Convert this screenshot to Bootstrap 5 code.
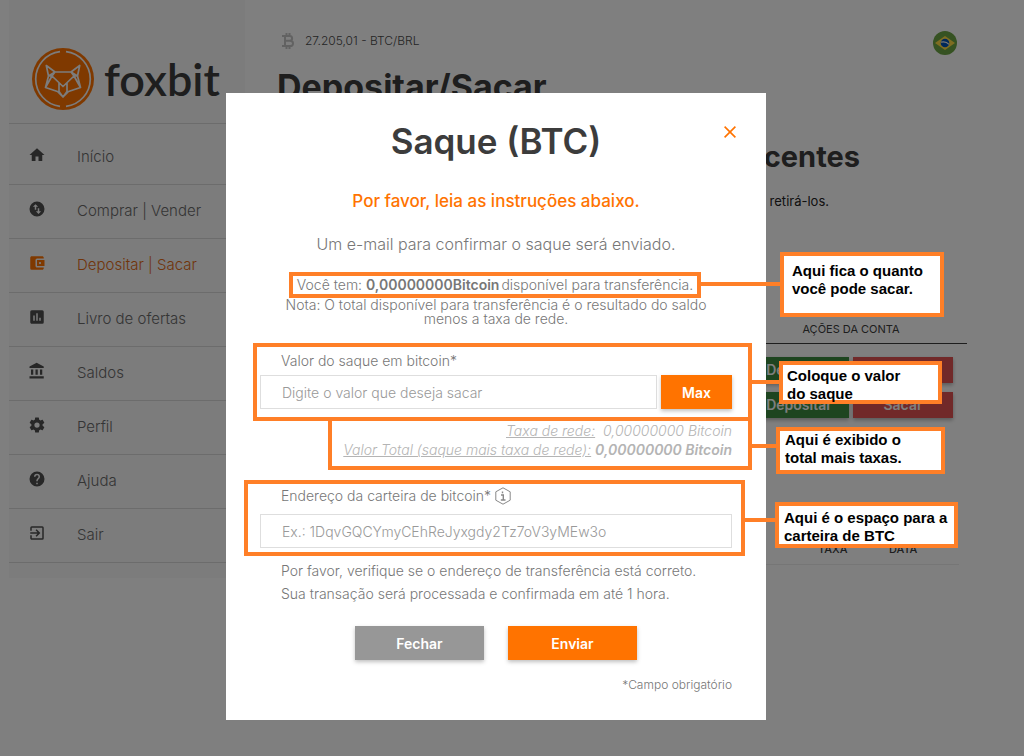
<!DOCTYPE html>
<html lang="pt-BR">
<head>
<meta charset="utf-8">
<meta name="viewport" content="width=device-width, initial-scale=1">
<title>Foxbit - Saque (BTC)</title>
<link href="https://cdn.jsdelivr.net/npm/bootstrap@5.3.0/dist/css/bootstrap.min.css" rel="stylesheet">
<style>
  :root { --fox: #ff7300; --note: #ff7f27; }
  body { font-family: Inter, "Open Sans", sans-serif; font-size: 14px; font-weight: 300; color: #3c3c3c; }

  /* Sidebar */
  .side { flex: 0 0 236px; margin-left: 9px; height: 578px; background: #f8f8f8; }
  .brand { height: 124px; padding: 48px 0 0 23px; border-bottom: 1px solid #d8d8d8; gap: 10px; }
  .brand-name { font: 600 45px/62px Lato, sans-serif; color: #3c3c3c; }
  .menu { padding-top: 7px; }
  .menu a { height: 54px; padding-left: 19px; gap: 31px; font-size: 15px; color: #6a6a6a; text-decoration: none; border-bottom: 1px solid #d8d8d8; }
  .menu svg { width: 18px; height: 18px; fill: #4e4e4e; margin-bottom: 6px; }
  .menu a.on { color: #e26a14; }
  .menu a.on svg { fill: var(--fox); }

  /* Page behind the dialog */
  .main { padding: 31px 57px 0 32px; }
  .quote { font-size: 12px; line-height: 16px; gap: 10px; color: #4a4a4a; padding: 0 0 4px 4px; }
  .main h1 { font-size: 34px; line-height: 40px; font-weight: 700; margin: 12px 0 0; }
  .main h2 { font-size: 29px; line-height: 36px; font-weight: 700; margin: 32px 107px 0 0; }
  .hint { font-size: 13px; line-height: 20px; font-weight: 400; color: #222; margin: 16px 138px 0 0; }
  .accounts { margin-top: 108px; width: 100%; }
  .accounts th { font-size: 11px; line-height: 18px; font-weight: 400; padding-bottom: 5px; border-bottom: 1px solid #3c3c3c; }
  .accounts .acts { width: 232px; text-align: center; }
  .accounts .first td { padding-top: 13px; }
  .accounts td { padding: 0 14px 9px 0; }
  .act { width: 100px; height: 26px; padding: 0; border: 0; border-radius: 0; font-size: 14px; line-height: 24px; font-weight: 600; color: #fff; box-shadow: 0 2px 4px rgba(0,0,0,.3); }
  .act-in { background: #3d8b40; }
  .act-out { background: #e25252; }
  .moves { margin-top: 114px; width: calc(100% - 8px); }
  .moves th { font-size: 11px; line-height: 14px; font-weight: 500; padding-bottom: 8px; border-bottom: 1px solid #ececec; width: 71px; text-align: left; }
  .moves th:first-child { width: auto; }

  /* Dialog */
  .shade { background: rgba(0,0,0,.5); padding-right: 32px; }
  .shade .modal-dialog { max-width: 540px; margin: 93px auto 36px; }
  .sheet { border: 0; border-radius: 0; padding: 28px 34px 26px; color: #777; }
  .sheet h3 { font-size: 35px; line-height: 40px; font-weight: 600; color: #3c3c3c; margin: 0 0 28px; }
  .lead-in { font-size: 17px; line-height: 24px; font-weight: 500; color: var(--fox); margin: 0 0 19px; }
  .mail { font-size: 16px; line-height: 24px; margin: 0 0 16px; }
  .memo { line-height: 14px; margin: 0 0 17px; }
  .memo, .after, .framed-label { font-size: 14px; }
  .x-close { position: absolute; top: 31px; right: 28px; width: 16px; height: 16px; padding: 0; border: 0; background: none; display: flex; align-items: center; justify-content: center; }
  .framed-label { line-height: 20px; margin-left: 21px; }
  .field { height: 34px; border: 1px solid #dedede; border-radius: 0; padding: 0 21px; font-size: 14px; font-weight: 300; color: #666; }
  .field::placeholder { color: #999; opacity: 1; }
  .cta { height: 34px; padding: 0; border: 0; border-radius: 0; font-size: 14px; font-weight: 600; color: #fff; background: var(--fox); box-shadow: 0 2px 4px rgba(0,0,0,.25); }
  .cta:hover { color: #fff; background: #e66800; }
  .cta-max { flex: 0 0 71px; }
  .cta-wide { width: 129px; }
  .cta-gray { background: #979797; }
  .fees { font-size: 14px; line-height: 19px; font-style: italic; color: #b4b4b4; }
  .fees b { font-weight: 600; }
  .after { line-height: 23px; margin: 3px 0 21px 21px; }
  .req { font-size: 12px; line-height: 18px; margin: 16px 0 0; }

  /* Tutorial frames and their callouts */
  .framed { position: relative; border: 4px solid var(--note); }
  .framed::after { content: ""; position: absolute; left: calc(100% + 4px); height: 4px; background: var(--note); }
  .callout-box { position: absolute; z-index: 1; border: 4px solid var(--note); background: #fff; color: #000; font: bold 15px/18px "Liberation Sans", sans-serif; text-align: left; white-space: nowrap; }
  .f-have { width: 412px; margin: 0 0 0 29px; line-height: 18px; }
  .f-have b { font-weight: 600; margin-right: 2px; }
  .f-have::after { top: 6px; width: 79px; }
  .f-have .callout-box { left: 487px; top: -24px; width: 164px; height: 65px; padding: 6px 8px; }
  .f-value { margin: 0 -20px 0 -7px; padding: 4px 16px 8px 3px; }
  .f-value::after { top: 33px; width: 28px; }
  .f-value .callout-box { left: 522px; top: 14px; width: 163px; height: 43px; padding: 2px 4px; }
  .f-fees { margin: -4px -20px 10px 68px; padding: 0 16px 7px 0; }
  .f-fees::after { top: 23px; width: 25px; }
  .f-fees .callout-box { left: 444px; top: 6px; width: 169px; height: 47px; padding: 0 5px; }
  .f-wallet { margin: 0 -13px 0 -16px; padding: 2px 9px 4px 12px; }
  .f-wallet::after { top: 34px; width: 31px; }
  .f-wallet .callout-box { left: 527px; top: 18px; width: 183px; height: 46px; padding: 3px 5px; }
</style>
</head>
<body>
<div class="d-flex align-items-start">
  <aside class="side">
    <div class="brand d-flex">
      <svg width="62" height="62" viewBox="0 0 62 62" fill="none" stroke="#f8f8f8" stroke-width="1.7" stroke-linejoin="round">
        <circle cx="31" cy="31" r="31" fill="#ff7300" stroke="none"/>
        <path d="M28 3.6A27.6 27.6 0 0 0 28 58.4M34 3.6A27.6 27.6 0 0 1 34 58.4"/>
        <path d="M14.300 17.500L23 24H39L47.700 17.500L45.500 28L48.500 39.500L36.500 43.500L31 49L25.500 43.500L13.500 39.500L16.500 28ZM16.500 28L23 24M45.500 28L39 24M16.500 28H20L31 38.500L42 28H45.500M20 28L23 24M42 28L39 24M27 35V43.500L31 49L35 43.500V35M13.500 39.500L20 28M48.500 39.500L42 28"/>
      </svg>
      <span class="brand-name">foxbit</span>
    </div>
    <nav class="menu nav flex-column flex-nowrap">
      <a href="#" class="d-flex align-items-center"><svg viewBox="0 0 24 24"><path d="M10 20v-6h4v6h5v-8h3L12 3 2 12h3v8z"/></svg>Início</a>
      <a href="#" class="d-flex align-items-center"><svg viewBox="0 0 24 24"><path fill-rule="evenodd" d="M12 2a10 10 0 1 0 0 20 10 10 0 0 0 0-20zM6.500 9L10 5.500 13.500 9H11v4H9V9zM17.500 15L14 18.500 10.500 15H13v-4h2v4z"/></svg>Comprar | Vender</a>
      <a href="#" class="on d-flex align-items-center"><svg viewBox="0 0 24 24"><path d="M21 18v1c0 1.100-.9 2-2 2H5a2 2 0 0 1-2-2V5c0-1.100.9-2 2-2h14c1.100 0 2 .9 2 2v1h-9a2 2 0 0 0-2 2v8c0 1.100.9 2 2 2zm-9-2h10V8H12zm4-2.500a1.500 1.500 0 1 1 0-3 1.500 1.500 0 0 1 0 3z"/></svg>Depositar | Sacar</a>
      <a href="#" class="d-flex align-items-center"><svg viewBox="0 0 24 24"><path fill-rule="evenodd" d="M19 3H5a2 2 0 0 0-2 2v14c0 1.100.9 2 2 2h14a2 2 0 0 0 2-2V5a2 2 0 0 0-2-2zM9 17H7v-7h2zm4 0h-2V7h2zm4 0h-2v-4h2z"/></svg>Livro de ofertas</a>
      <a href="#" class="d-flex align-items-center"><svg viewBox="0 0 24 24"><path d="M4 10v7h3v-7zm6 0v7h3v-7zM2 22h19v-3H2zm14-12v7h3v-7zM11.500 1L2 6v2h19V6z"/></svg>Saldos</a>
      <a href="#" class="d-flex align-items-center"><svg viewBox="0 0 24 24"><path d="M19.430 12.980c.04-.32.070-.64.070-.98s-.03-.66-.07-.98l2.110-1.650c.19-.15.240-.42.120-.64l-2-3.460c-.12-.22-.39-.3-.61-.22l-2.490 1c-.52-.4-1.080-.73-1.690-.98l-.38-2.650A.488.488 0 0 0 14 2h-4c-.25 0-.46.180-.49.420l-.38 2.650c-.61.250-1.170.590-1.690.980l-2.490-1c-.23-.09-.49 0-.61.220l-2 3.460c-.13.220-.07.490.12.640l2.110 1.650c-.04.320-.07.650-.07.980s.03.660.070.980l-2.110 1.650c-.19.150-.24.420-.12.640l2 3.460c.12.220.390.300.610.220l2.490-1c.52.400 1.080.730 1.690.980l.38 2.650c.03.240.240.420.490.420h4c.25 0 .46-.18.490-.42l.38-2.650c.61-.25 1.170-.59 1.690-.98l2.490 1c.23.090.490 0 .61-.22l2-3.460c.12-.22.070-.49-.12-.64zM12 15.500a3.500 3.500 0 1 1 0-7 3.500 3.500 0 0 1 0 7z"/></svg>Perfil</a>
      <a href="#" class="d-flex align-items-center"><svg viewBox="0 0 24 24"><path d="M12 2a10 10 0 1 0 0 20 10 10 0 0 0 0-20zm1 17h-2v-2h2zm2.070-7.750l-.9.920C13.450 12.900 13 13.500 13 15h-2v-.5c0-1.100.45-2.100 1.170-2.830l1.240-1.260A2 2 0 1 0 10 9H8a4 4 0 1 1 8 0c0 .88-.36 1.680-.93 2.250z"/></svg>Ajuda</a>
      <a href="#" class="d-flex align-items-center"><svg viewBox="0 0 24 24"><path d="M10.090 15.590L11.500 17l5-5-5-5-1.410 1.410L12.670 11H3v2h9.670zM19 3H5a2 2 0 0 0-2 2v4h2V5h14v14H5v-4H3v4c0 1.100.9 2 2 2h14a2 2 0 0 0 2-2V5a2 2 0 0 0-2-2z"/></svg>Sair</a>
    </nav>
  </aside>

  <main class="main flex-grow-1">
    <div class="d-flex justify-content-between align-items-center">
      <div class="quote d-flex align-items-center">
        <svg width="14" height="16" viewBox="0 0 14 16" fill="none" stroke="#c4c4c4" stroke-width="2"><path d="M1 3H8.500C12 3 12 7.800 8.500 7.800H4M1 13H9C13 13 13 7.800 9 7.800M4 3V13M5.500 0V3M8.500 0V3M5.500 13V16M8.500 13V16"/></svg>
        <span>27.205,01 - BTC/BRL</span>
      </div>
      <svg class="me-2" width="26" height="24" viewBox="0 0 26 24"><circle cx="12" cy="12" r="12" fill="#6da544"/><path d="M12 5L22 12L12 19L2 12Z" fill="#ffda44"/><circle cx="12" cy="12" r="4.300" fill="#0052b4"/><path d="M8 11.200C11 10.300 14 11.200 16 13.400" fill="none" stroke="#f0f0f0" stroke-width="1.300"/></svg>
    </div>
    <h1>Depositar/Sacar</h1>
    <h2 class="text-end">Depósitos recentes</h2>
    <p class="hint text-end">Deposite fundos ou retirá-los.</p>
    <table class="accounts">
      <thead><tr><th></th><th class="acts">AÇÕES DA CONTA</th></tr></thead>
      <tbody>
        <tr class="first"><td></td><td><div class="d-flex justify-content-end gap-1"><button class="btn act act-in">Depositar</button><button class="btn act act-out">Sacar</button></div></td></tr>
        <tr><td></td><td><div class="d-flex justify-content-end gap-1"><button class="btn act act-in">Depositar</button><button class="btn act act-out">Sacar</button></div></td></tr>
      </tbody>
    </table>
    <table class="moves"><thead><tr><th></th><th>TAXA</th><th>DATA</th></tr></thead></table>
  </main>
</div>

<div class="modal shade d-block" role="dialog" aria-labelledby="dlg-title">
  <div class="modal-dialog">
    <div class="modal-content sheet">
      <button class="x-close" type="button" aria-label="Fechar janela"><svg width="12" height="12" viewBox="0 0 12 12" stroke="#ff7300" stroke-width="1.600"><path d="M.6.6L11.400 11.400M11.400.6L.6 11.400"/></svg></button>
      <h3 id="dlg-title" class="text-center">Saque (BTC)</h3>
      <p class="lead-in text-center">Por favor, leia as instruções abaixo.</p>
      <p class="mail text-center">Um e-mail para confirmar o saque será enviado.</p>

      <div class="framed f-have text-center">Você tem: <b>0,00000000Bitcoin</b>disponível para transferência.
        <div class="callout-box">Aqui fica o quanto<br>você pode sacar.</div>
      </div>
      <p class="memo text-center">Nota: O total disponível para transferência é o resultado do saldo<br>menos a taxa de rede.</p>

      <div class="framed f-value">
        <label class="framed-label d-block mb-1" for="amount">Valor do saque em bitcoin*</label>
        <div class="d-flex gap-1">
          <input id="amount" class="form-control field" type="text" placeholder="Digite o valor que deseja sacar">
          <button class="btn cta cta-max" type="button">Max</button>
        </div>
        <div class="callout-box">Coloque o valor<br>do saque</div>
      </div>

      <div class="framed f-fees">
        <div class="fees text-end">
          <div><u>Taxa de rede:</u>&nbsp; 0,00000000 Bitcoin</div>
          <div><u>Valor Total (saque mais taxa de rede):</u> <b>0,00000000 Bitcoin</b></div>
        </div>
        <div class="callout-box">Aqui é exibido o<br>total mais taxas.</div>
      </div>

      <div class="framed f-wallet">
        <div class="d-flex align-items-center gap-1 mb-2">
          <label class="framed-label" for="wallet">Endereço da carteira de bitcoin*</label>
          <svg width="16" height="18" viewBox="0 0 16 18" fill="none" stroke="#888"><path d="M8 .8L15.200 4.800V13.200L8 17.200L.8 13.200V4.800Z"/><path d="M6 8H8.300V13M5.800 13H10.500M7.500 4.500V6.200" stroke-width="1.400"/></svg>
        </div>
        <input id="wallet" class="form-control field" type="text" placeholder="Ex.: 1DqvGQCYmyCEhReJyxgdy2Tz7oV3yMEw3o">
        <div class="callout-box">Aqui é o espaço para a<br>carteira de BTC</div>
      </div>

      <p class="after">Por favor, verifique se o endereço de transferência está correto.<br>Sua transação será processada e confirmada em até 1 hora.</p>
      <div class="d-flex justify-content-center gap-4">
        <button class="btn cta cta-wide cta-gray" type="button">Fechar</button>
        <button class="btn cta cta-wide" type="button">Enviar</button>
      </div>
      <p class="req text-end">*Campo obrigatório</p>
    </div>
  </div>
</div>
<script src="https://cdn.jsdelivr.net/npm/bootstrap@5.3.0/dist/js/bootstrap.bundle.min.js"></script>
</body>
</html>
